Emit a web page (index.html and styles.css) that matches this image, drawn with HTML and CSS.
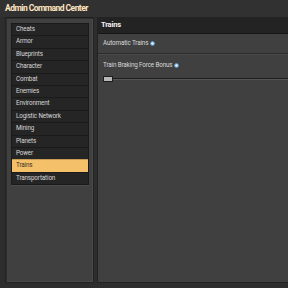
FILE: index.html
```html
<!DOCTYPE html>
<html lang="en">
<head>
    <meta charset="UTF-8">
    <meta name="viewport" content="width=device-width, initial-scale=1.0">
    <title>Admin Command Center</title>
    <link rel="stylesheet" href="styles.css">
</head>
<body>
    <div class="window">
        <div class="titlebar">Admin Command Center</div>
        <div class="content">
            <div class="side-panel">
                <ul class="categories">
                    <li>Cheats</li>
                    <li>Armor</li>
                    <li>Blueprints</li>
                    <li>Character</li>
                    <li>Combat</li>
                    <li>Enemies</li>
                    <li>Environment</li>
                    <li>Logistic Network</li>
                    <li>Mining</li>
                    <li>Planets</li>
                    <li>Power</li>
                    <li class="selected">Trains</li>
                    <li>Transportation</li>
                </ul>
            </div>
            <div class="main-panel">
                <div class="panel-header">Trains</div>
                <div class="setting">
                    <span>Automatic Trains</span><span class="info"></span>
                </div>
                <div class="setting slider-setting">
                    <div class="label"><span>Train Braking Force Bonus</span><span class="info"></span></div>
                    <div class="slider">
                        <div class="thumb"></div>
                        <div class="track"></div>
                    </div>
                </div>
            </div>
        </div>
    </div>
</body>
</html>
```

FILE: styles.css
```css
body {
    margin: 0;
    background-color: #2e2d2e;
    font-family: Roboto, "Noto Sans", sans-serif;
    color: #e3e3e3;
}
.window {
    width: 288px;
    height: 288px;
    display: flex;
    flex-direction: column;
    overflow: hidden;
    background-color: #2e2d2e;
}
.titlebar {
    height: 17px;
    line-height: 17px;
    padding-left: 5px;
    font-size: 8.5px;
    font-weight: bold;
    letter-spacing: -0.55px;
    color: #ffe6c0;
    background-color: #323132;
}
.content {
    flex: 1;
    display: flex;
    gap: 3px;
    padding: 0 0 5px 5px;
}
.side-panel {
    width: 78px;
    background-color: #404040;
    border: 1px solid #232223;
    border-top-color: #1e1d1e;
    box-shadow: inset 1px 1px 0 #2f2f2f, inset -1px -1px 0 #4a4a4a;
    padding: 5px 4px 0 5px;
}
.categories {
    list-style-type: none;
    margin: 0;
    padding: 0;
    border: 1px solid #1a1a1a;
    box-shadow: 0 1px 0 #4c4c4c;
}
.categories li {
    height: 11.4px;
    line-height: 11.4px;
    padding-left: 4px;
    font-size: 6.3px;
    letter-spacing: -0.15px;
    background-color: #262526;
    border-top: 1px solid #1a1a1a;
    color: #d6d6d6;
}
.categories li:first-child {
    border-top: none;
}
.categories li.selected {
    background-color: #f4c06a;
    color: #3a3125;
    border-top-color: #c99c55;
}
.main-panel {
    flex: 1;
    background-color: #404040;
    border: 1px solid #232223;
    border-right: none;
}
.panel-header {
    height: 15px;
    line-height: 14px;
    padding-left: 3px;
    font-size: 7.5px;
    font-weight: bold;
    letter-spacing: -0.2px;
    color: #f2f2f2;
    background-color: #242324;
    border-bottom: 1px solid #161616;
}
.setting {
    padding: 3px 5px 4px 5px;
    height: 12px;
    font-size: 6.3px;
    letter-spacing: -0.15px;
    color: #d8d8d8;
    border-bottom: 1px solid #2c2c2c;
    box-shadow: 0 1px 0 #4a4a4a;
    display: flex;
    align-items: center;
}
.slider-setting {
    height: auto;
    display: block;
    padding-top: 7px;
    padding-right: 0;
    border-bottom: none;
    box-shadow: none;
}
.label {
    height: 8px;
    line-height: 8px;
}
.info {
    display: inline-block;
    width: 3px;
    height: 3px;
    margin-left: 2px;
    border-radius: 50%;
    background-color: #cfe6f7;
    border: 1px solid #4d8cc0;
    vertical-align: middle;
}
.slider {
    display: flex;
    align-items: center;
    margin-top: 6.5px;
}
.thumb {
    width: 8px;
    height: 4px;
    background-color: #b8b8b8;
    border: 1px solid #1e1e1e;
}
.track {
    flex: 1;
    height: 1px;
    background-color: #1e1e1e;
    border-bottom: 1px solid #555;
}
```
